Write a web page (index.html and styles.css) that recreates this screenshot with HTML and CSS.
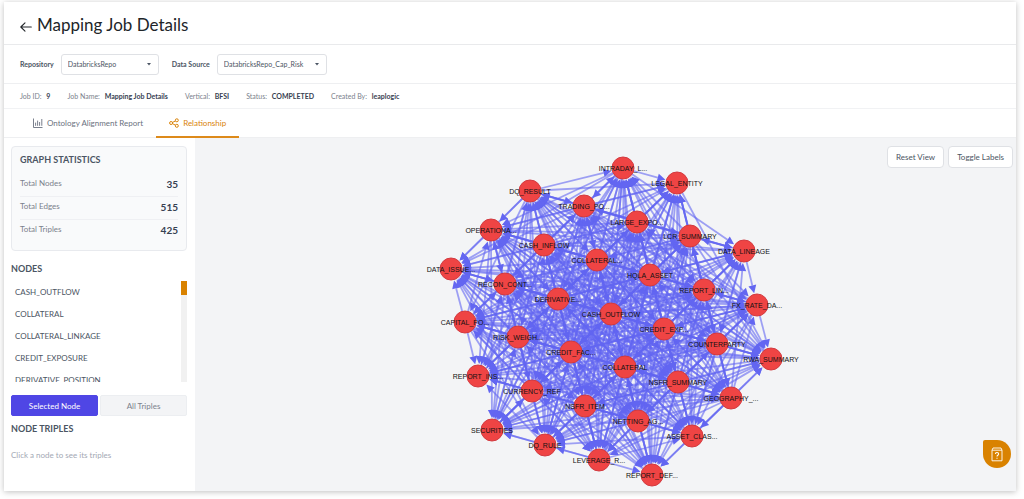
FILE: index.html
```html
<!DOCTYPE html>
<html lang="en">
<head>
    <meta charset="UTF-8">
    <meta name="viewport" content="width=device-width, initial-scale=1.0">
    <title>Mapping Job Details</title>
    <link rel="stylesheet" href="styles.css">
</head>
<body>

<div class="page">
    <header class="page-header">
        <a href="#" class="back-link" aria-label="Back">
            <svg width="12" height="10" viewBox="0 0 12 10" fill="none" stroke="currentColor" stroke-width="1.1" stroke-linecap="round" stroke-linejoin="round"><path d="M11.3 5H.8M5 .8.8 5 5 9.2"/></svg>
        </a>
        <h1>Mapping Job Details</h1>
    </header>

    <div class="filters">
        <label for="repository">Repository</label>
        <select id="repository" class="select-box">
            <option>DatabricksRepo</option>
        </select>
        <label for="dataSource">Data Source</label>
        <select id="dataSource" class="select-box wide">
            <option>DatabricksRepo_Cap_Risk</option>
        </select>
    </div>

    <div class="job-info">
        <div>Job ID: <strong>9</strong></div>
        <div>Job Name: <strong>Mapping Job Details</strong></div>
        <div>Vertical: <strong>BFSI</strong></div>
        <div>Status: <strong>COMPLETED</strong></div>
        <div>Created By: <strong>leaplogic</strong></div>
    </div>

    <nav class="tabs">
        <a href="#report" class="tab">
            <svg width="10" height="10" viewBox="0 0 10 10" fill="none" stroke="currentColor" stroke-width=".9"><path d="M.5.5v9h9M2.6 4.6v3.2M4.6 2.6v5.2M6.6 4v3.8M8.8 1v6.8"/></svg>
            Ontology Alignment Report
        </a>
        <a href="#relationship" class="tab active">
            <svg width="10" height="10" viewBox="0 0 10 10" fill="none" stroke="currentColor" stroke-width="1"><circle cx="2.1" cy="5" r="1.5"/><circle cx="7.8" cy="2.3" r="1.5"/><circle cx="7.8" cy="7.8" r="1.5"/><path d="M3.5 4.4 6.4 3M3.5 5.7l2.9 1.4"/></svg>
            Relationship
        </a>
    </nav>

    <main class="content">
        <aside class="sidebar">
            <section class="stats">
                <h2>GRAPH STATISTICS</h2>
                <dl>
                    <div class="stat"><dt>Total Nodes</dt><dd>35</dd></div>
                    <div class="stat"><dt>Total Edges</dt><dd>515</dd></div>
                    <div class="stat"><dt>Total Triples</dt><dd>425</dd></div>
                </dl>
            </section>

            <h2>NODES</h2>
            <div class="node-box">
                <ul class="node-list">
                    <li>CASH_OUTFLOW</li>
                    <li>COLLATERAL</li>
                    <li>COLLATERAL_LINKAGE</li>
                    <li>CREDIT_EXPOSURE</li>
                    <li>DERIVATIVE_POSITION</li>
                </ul>
                <div class="scroll-track"><div class="scroll-thumb"></div></div>
            </div>

            <div class="toggle">
                <button type="button" class="toggle-btn active">Selected Node</button>
                <button type="button" class="toggle-btn">All Triples</button>
            </div>

            <h2>NODE TRIPLES</h2>
            <p class="hint">Click a node to see its triples</p>
        </aside>

        <section class="graph">
            <svg id="graph" viewBox="0 0 821 353" role="img" aria-label="Relationship graph"></svg>
            <div class="graph-actions">
                <button type="button">Reset View</button>
                <button type="button" id="toggleLabels">Toggle Labels</button>
            </div>
        </section>
    </main>
</div>

<button type="button" class="help-btn" aria-label="Help">
    <svg width="12" height="15" viewBox="0 0 12 15" fill="none" stroke="currentColor" stroke-width=".9"><path d="M1 3.2 2 1h8l1 2.2M1 3.2h10v10.6H1z"/><path d="M4.4 7c0-2 3.2-2 3.2 0C7.6 8.300 6 8.200 6 9.600M6 10.800v1" stroke-width="1.1"/></svg>
</button>

<script src="graph.js"></script>
</body>
</html>
```

FILE: styles.css
```css
* {
    box-sizing: border-box;
}
body {
    margin: 0;
    background: #fff;
    font-family: Lato, "Open Sans", sans-serif;
    font-size: 8px;
    color: #4b5563;
}
button, select {
    font-family: inherit;
    font-size: 8px;
}
h1, h2, p, ul, dl, dd {
    margin: 0;
    padding: 0;
}
.page {
    display: flex;
    flex-direction: column;
    height: calc(100vh - 10px);
    min-height: 480px;
    margin: 2px 8px 8px 4px;
    background: #fff;
    box-shadow: 0 1px 6px rgba(0, 0, 0, 0.25);
}
.page-header {
    display: flex;
    align-items: center;
    gap: 5px;
    height: 43px;
    padding: 4px 16px 0;
    border-bottom: 1px solid #e9eaec;
}
.back-link {
    display: flex;
    padding-top: 4px;
    color: #212529;
}
h1 {
    font-size: 17px;
    font-weight: 400;
    line-height: 24px;
    color: #212529;
}

/* filters */
.filters {
    display: flex;
    align-items: center;
    height: 39px;
    padding: 0 16px;
    border-bottom: 1px solid #eeeff1;
}
.filters label {
    margin-right: 7px;
    font-size: 7px;
    font-weight: 700;
}
.select-box {
    appearance: none;
    width: 98px;
    height: 21px;
    margin-right: 13px;
    padding: 0 6px;
    border: 1px solid #dfe1e5;
    border-radius: 3px;
    font-size: 7px;
    color: #4b5563;
    background: #fff url("data:image/svg+xml,%3Csvg xmlns='http://www.w3.org/2000/svg' width='4' height='3'%3E%3Cpath d='M0 0h4L2 2.500z' fill='%234b5563'/%3E%3C/svg%3E") no-repeat right 7px center;
}
.select-box.wide {
    width: 110px;
}

/* job details */
.job-info {
    display: flex;
    align-items: center;
    gap: 17px;
    height: 25px;
    padding: 0 16px;
    border-bottom: 1px solid #f1f2f4;
    font-size: 7px;
    color: #7b818c;
}
.job-info strong {
    margin-left: 3px;
    color: #374151;
}

/* tabs */
.tabs {
    display: flex;
    height: 29px;
    padding-left: 16px;
    border-bottom: 1px solid #eeeff1;
}
.tab {
    display: flex;
    align-items: center;
    gap: 4px;
    height: 29px;
    padding: 0 13px;
    border-bottom: 2px solid transparent;
    color: #6b7280;
    text-decoration: none;
}
.tab.active {
    color: #d98309;
    border-color: #dd8a1a;
}

.content {
    display: flex;
    flex: 1;
    min-height: 0;
}

/* sidebar */
.sidebar {
    width: 191px;
    padding: 8px 8px 8px 7px;
}
h2 {
    font-size: 9px;
    font-weight: 700;
    line-height: 12px;
    color: #4b5563;
}
.stats {
    height: 105px;
    margin-bottom: 12px;
    padding: 7px 8px;
    border: 1px solid #e8eaee;
    border-radius: 4px;
    background: #f9fafb;
}
.stats dl {
    margin-top: 8px;
}
.stat {
    display: flex;
    justify-content: space-between;
    height: 23px;
    padding-top: 4px;
    border-bottom: 1px solid #eff0f3;
    color: #7b818c;
}
.stat:last-child {
    border-bottom: 0;
}
.stat dt {
    line-height: 10px;
}
.stat dd {
    font-size: 10px;
    font-weight: 700;
    line-height: 12px;
    color: #374151;
}
.node-box {
    display: flex;
    height: 101px;
    margin: 6px 0 13px;
    overflow: hidden;
}
.node-list {
    flex: 1;
    list-style: none;
}
.node-list li {
    padding-left: 4px;
    line-height: 22px;
}
.scroll-track {
    width: 6px;
    background: #f1f1f1;
}
.scroll-thumb {
    height: 14px;
    background: #d98200;
}
.toggle {
    display: flex;
    gap: 2px;
    margin-bottom: 7px;
}
.toggle-btn {
    flex: 1;
    height: 21px;
    border: 1px solid #eceef1;
    border-radius: 2px;
    background: #f3f4f6;
    color: #7b818c;
}
.toggle-btn.active {
    border-color: #4f46e5;
    background: #4f46e5;
    color: #fff;
}
.hint {
    margin-top: 14px;
    line-height: 12px;
    color: #a3a8b4;
}

/* graph */
.graph {
    position: relative;
    flex: 1;
    min-width: 0;
    background: #f3f4f6;
}
.graph > svg {
    display: block;
    width: 100%;
    height: 100%;
}
.edge {
    stroke: #6366f1;
    stroke-width: 1.8;
    stroke-opacity: 0.6;
}
.arrow {
    fill: #6366f1;
}
.node {
    fill: #ef4444;
    stroke: #d23a40;
    stroke-width: 1;
}
.node-label {
    font-family: "Liberation Sans", Arial, sans-serif;
    font-size: 7px;
    text-anchor: middle;
    fill: #111;
}
.labels-off .node-label {
    display: none;
}
.graph-actions {
    position: absolute;
    top: 8px;
    right: 3px;
    display: flex;
    gap: 4px;
}
.graph-actions button {
    height: 22px;
    padding: 0 8px;
    border: 1px solid #dfe1e5;
    border-radius: 4px;
    background: #fff;
    color: #4b5563;
}

.help-btn {
    position: fixed;
    right: 13px;
    bottom: 31px;
    display: flex;
    align-items: center;
    justify-content: center;
    width: 28px;
    height: 28px;
    padding: 0;
    border: 0;
    border-radius: 2px 14px 14px 14px;
    background: #d98200;
    color: #fff;
}
```

FILE: graph.js
```js
// name, x, y
const nodes = [
    ["CASH_OUTFLOW", 416, 176],
    ["COLLATERAL", 430, 229],
    ["COLLATERAL_LINKAGE", 402, 122],
    ["CREDIT_EXPOSURE", 469, 191],
    ["DERIVATIVE_POSITION", 363, 161],
    ["CREDIT_FACILITY", 376, 214],
    ["HQLA_ASSET", 455, 137],
    ["NSFR_SUMMARY", 483, 244],
    ["CASH_INFLOW", 349, 107],
    ["NSFR_ITEM", 390, 268],
    ["LARGE_EXPOSURE", 442, 84],
    ["COUNTERPARTY", 522, 206],
    ["RISK_WEIGHTING", 323, 199],
    ["NETTING_AGREEMENT", 443, 283],
    ["TRADING_POSITION", 389, 68],
    ["REPORT_LINEAGE", 509, 152],
    ["RECON_CONTROL", 310, 146],
    ["CURRENCY_REF", 337, 253],
    ["LCR_SUMMARY", 495, 98],
    ["GEOGRAPHY_REF", 536, 260],
    ["DQ_RESULT", 335, 53],
    ["LEVERAGE_RATIO", 404, 322],
    ["INTRADAY_LIQUIDITY", 428, 30],
    ["FX_RATE_DAILY", 562, 167],
    ["CAPITAL_POSITION", 270, 184],
    ["ASSET_CLASS_REF", 497, 298],
    ["OPERATIONAL_RISK", 296, 92],
    ["DQ_RULE", 350, 307],
    ["LEGAL_ENTITY", 482, 45],
    ["RWA_SUMMARY", 576, 221],
    ["REPORT_INSTANCE", 283, 238],
    ["REPORT_DEFINITION", 457, 337],
    ["DATA_ISSUE_LOG", 256, 131],
    ["SECURITIES", 297, 292],
    ["DATA_LINEAGE", 549, 113]
];

const RADIUS = 11;
const ARROW = 8;
const MAX_EDGES = 515;
const svg = document.getElementById("graph");

function add(tag, attrs, text) {
    const el = document.createElementNS("http://www.w3.org/2000/svg", tag);
    for (const key in attrs) el.setAttribute(key, attrs[key]);
    if (text) el.textContent = text;
    svg.appendChild(el);
}

function shorten(name) {
    return name.length > 12 ? name.slice(0, 10) + "..." : name;
}

function drawEdge(from, to) {
    const dx = to[1] - from[1];
    const dy = to[2] - from[2];
    const len = Math.hypot(dx, dy);
    const ux = dx / len;
    const uy = dy / len;
    const tipX = to[1] - ux * (RADIUS + 1);
    const tipY = to[2] - uy * (RADIUS + 1);
    const baseX = tipX - ux * ARROW;
    const baseY = tipY - uy * ARROW;
    add("line", { class: "edge", x1: from[1], y1: from[2], x2: baseX, y2: baseY });
    add("path", {
        class: "arrow",
        d: `M${tipX} ${tipY}L${baseX - uy * 4} ${baseY + ux * 4}L${baseX + uy * 4} ${baseY - ux * 4}Z`
    });
}

// later nodes mostly receive the link, a few run the other way
let count = 0;
for (let i = 0; i < nodes.length; i++) {
    for (let j = i + 1; j < nodes.length; j++) {
        const key = (i * 31 + j * 17) % 29;
        if (key < 3 || count >= MAX_EDGES) continue;
        if (key % 5 === 0) drawEdge(nodes[j], nodes[i]);
        else drawEdge(nodes[i], nodes[j]);
        count++;
    }
}

nodes.forEach(([name, x, y]) => {
    add("circle", { class: "node", cx: x, cy: y, r: RADIUS });
    add("text", { class: "node-label", x: x, y: y + 3 }, shorten(name));
});

document.getElementById("toggleLabels").addEventListener("click", () => {
    svg.classList.toggle("labels-off");
});
```
